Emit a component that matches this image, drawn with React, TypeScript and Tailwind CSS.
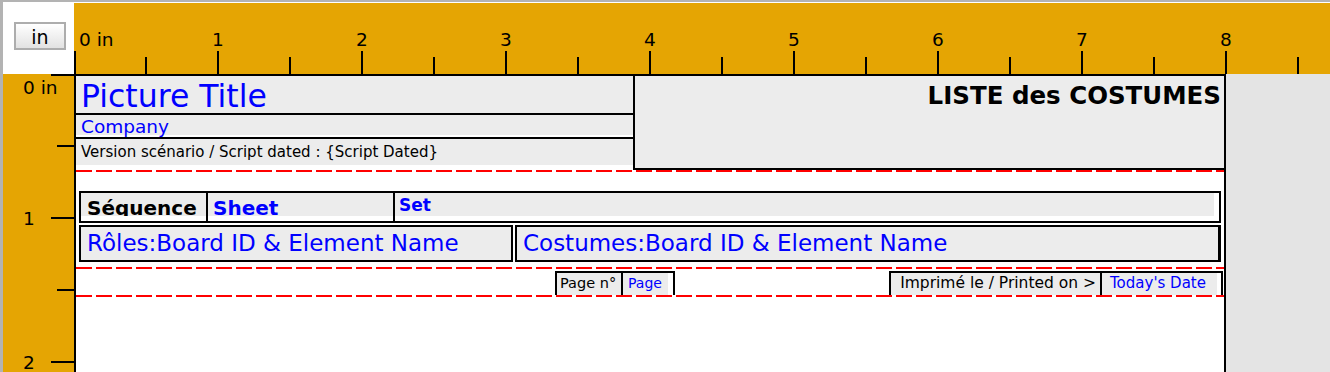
const INCH = 144;
const ORANGE = "bg-[#e5a503]";

function TopRuler() {
  const ks = [0, 1, 2, 3, 4, 5, 6, 7, 8];
  return (
    <div className={`relative mt-px h-[71px] flex-1 ${ORANGE}`}>
      <svg className="absolute inset-0" width="1256" height="71">
        {ks.map((k) => (
          <rect key={"M" + k} x={Math.max(0, k * INCH - 1)} y={48} width={2} height={23} fill="#000" />
        ))}
        {ks.map((k) => (
          <rect key={"h" + k} x={k * INCH + 71} y={54} width={2} height={17} fill="#000" />
        ))}
      </svg>
      <span className="absolute left-[5px] top-[27px] text-[18.5px] leading-[19px] text-black">0 in</span>
      {ks.slice(1).map((k) => (
        <span
          key={k}
          className="absolute top-[27px] -translate-x-1/2 text-[18.5px] leading-[19px] text-black"
          style={{ left: k * INCH }}
        >
          {k}
        </span>
      ))}
    </div>
  );
}

function LeftRuler() {
  const ks = [0, 1, 2];
  return (
    <div className={`relative w-[71px] ${ORANGE}`}>
      <svg className="absolute inset-0" width="71" height="298">
        {ks.map((k) => (
          <rect key={"M" + k} x={48} y={Math.max(0, k * INCH - 1)} width={23} height={2} fill="#000" />
        ))}
        {ks.map((k) => (
          <rect key={"h" + k} x={54} y={k * INCH + 71} width={17} height={2} fill="#000" />
        ))}
      </svg>
      <span className="absolute left-[20px] top-[4px] text-[18.5px] leading-[19px] text-black">0 in</span>
      <span className="absolute left-[20px] top-[135px] text-[18.5px] leading-[19px] text-black">1</span>
      <span className="absolute left-[20px] top-[279px] text-[18.5px] leading-[19px] text-black">2</span>
    </div>
  );
}

function Dashes() {
  return <div className="h-[2px] bg-[repeating-linear-gradient(90deg,#f00_0_16px,transparent_16px_20px)]" />;
}

function Header() {
  return (
    <div className="flex h-[94px]">
      <div className="flex w-[557px] flex-col">
        <div className="h-[39px] overflow-hidden border-b-2 border-black bg-[#ececec] pl-[5px] text-[31.5px] leading-[40px] text-[#0000ff]">
          Picture Title
        </div>
        <div className="h-[24px] border-b-2 border-black bg-white">
          <div className="h-[20px] bg-[#ececec] pl-[5px] text-[18.5px] leading-[23px] text-[#0000ff]">
            Company
          </div>
        </div>
        <div className="h-[26px] overflow-hidden bg-[#ececec] pl-[5px] text-[15px] leading-[26px] text-black">
          Version scénario / Script dated : {"{Script Dated}"}
        </div>
      </div>
      <div className="flex-1 border-b-2 border-l-2 border-black bg-[#ececec] pr-[3px] text-right text-[24.5px] font-bold leading-[39px] text-black">
        LISTE des COSTUMES
      </div>
    </div>
  );
}

function Body() {
  return (
    <div className="mx-[3px] mt-[19px] flex flex-col gap-[2px]">
      <div className="flex h-[32px] border-2 border-black bg-white">
        <div className="w-[127px] border-r-2 border-black">
          <div className="h-[23px] overflow-hidden bg-[#ececec] pl-[6px] text-[20px] font-bold leading-[31px] text-black">
            Séquence
          </div>
        </div>
        <div className="w-[187px] border-r-2 border-black">
          <div className="h-[23px] bg-[#ececec] pl-[5px] text-[20px] font-bold leading-[30px] text-[#0000ff]">
            Sheet
          </div>
        </div>
        <div className="flex-1 pr-[5px]">
          <div className="h-[23px] bg-[#ececec] pl-[4px] text-[17px] font-bold leading-[24px] text-[#0000ff]">
            Set
          </div>
        </div>
      </div>
      <div className="flex h-[37px] gap-[2px]">
        <div className="w-[434px] border-2 border-black bg-[#ececec] pl-[6px] text-[23px] leading-[32px] text-[#0000ff]">
          Rôles:Board ID &amp; Element Name
        </div>
        <div className="flex-1 border-2 border-r-[3px] border-black bg-[#ececec] pl-[6px] text-[23px] leading-[32px] text-[#0000ff]">
          Costumes:Board ID &amp; Element Name
        </div>
      </div>
    </div>
  );
}

function Footer() {
  return (
    <div className="flex h-[26px] items-end">
      <div className="ml-[479px] flex h-[24px] border-x-2 border-t-2 border-black">
        <div className="w-[66px] border-r-2 border-black bg-[#ececec] pl-[3px] text-[14.5px] leading-[21px] text-black">
          Page n°
        </div>
        <div className="w-[50px] bg-white">
          <div className="h-full w-[45px] bg-[#ececec] pl-[5px] text-[14px] leading-[21px] text-[#0000ff]">Page</div>
        </div>
      </div>
      <div className="ml-[214px] flex h-[24px] border-x-2 border-t-2 border-black">
        <div className="w-[211px] border-r-2 border-black bg-[#ececec] pr-[4px] text-right text-[15.5px] leading-[21px] text-black">
          Imprimé le / Printed on &gt;
        </div>
        <div className="w-[119px] bg-white">
          <div className="h-full w-[115px] bg-[#ececec] pl-[8px] text-[15px] leading-[21px] text-[#0000ff]">
            Today's Date
          </div>
        </div>
      </div>
    </div>
  );
}

export default function App() {
  return (
    <div className="flex h-[372px] w-[1330px] flex-col overflow-hidden border-l-[3px] border-t-2 border-[#b3b3b3] bg-white font-['DejaVu_Sans',sans-serif]">
      <div className="flex h-[72px] bg-white">
        <div className="w-[71px] pl-[11px] pt-[20px]">
          <div className="flex h-[28px] w-[52px] items-center justify-center border-2 border-[#adadad] bg-linear-to-b from-white to-[#e2e2e2] pt-[2px] text-[19px] leading-[19px] text-black">
            in
          </div>
        </div>
        <TopRuler />
      </div>
      <div className="flex flex-1">
        <LeftRuler />
        <div className="w-[1152px] border-x-2 border-t-2 border-black bg-white">
          <Header />
          <Dashes />
          <Body />
          <div className="mt-[5px]">
            <Dashes />
          </div>
          <Footer />
          <Dashes />
        </div>
        <div className="flex-1 bg-[#e4e4e4]" />
      </div>
    </div>
  );
}
